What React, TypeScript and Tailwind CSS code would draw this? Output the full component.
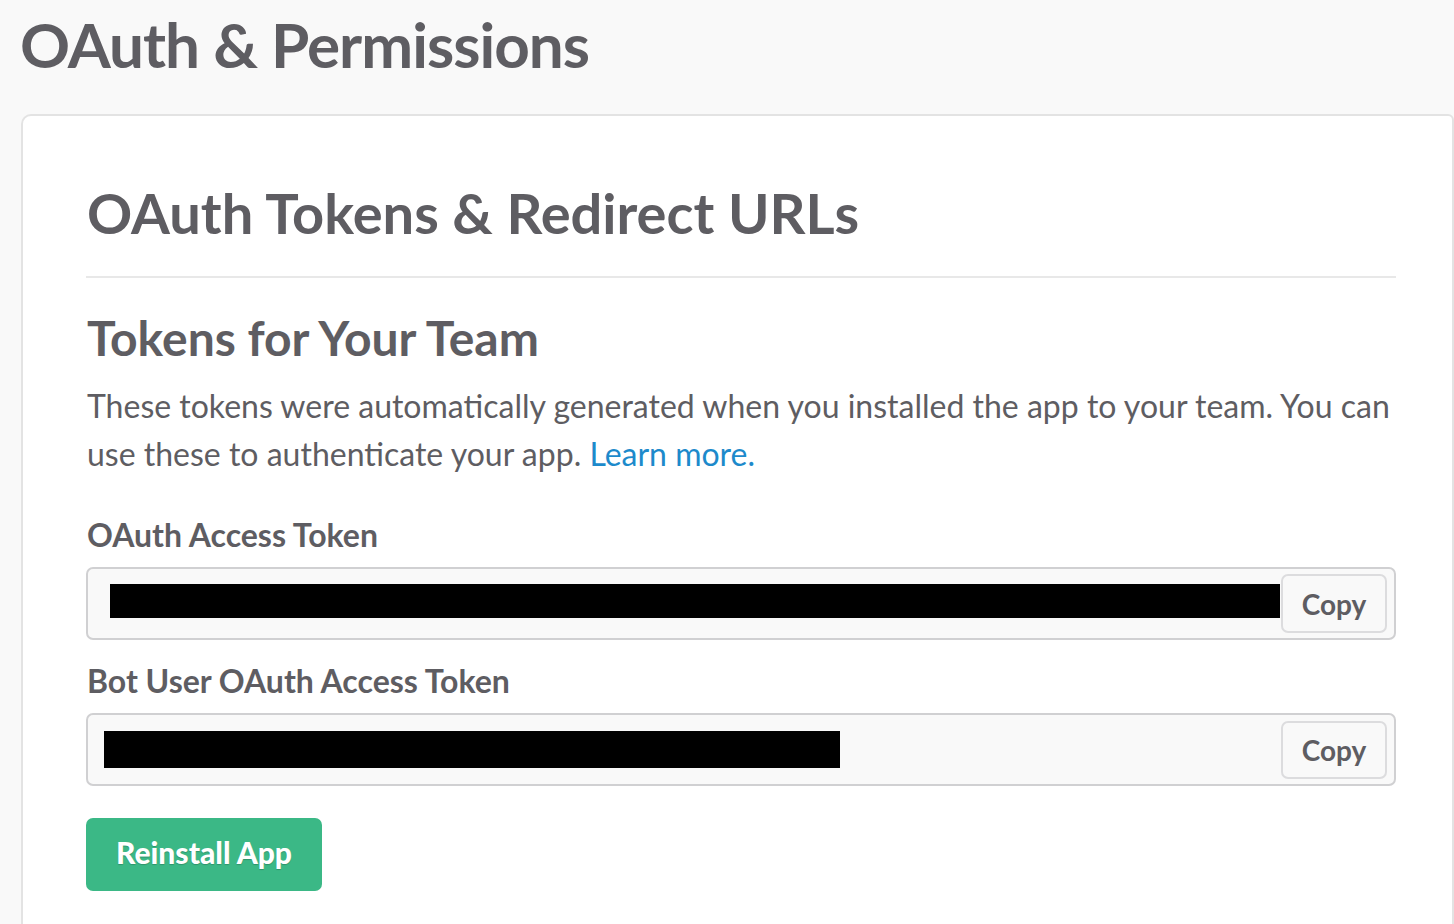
import React from "react";

const font = { fontFamily: "Lato, 'Noto Sans', sans-serif" };

export default function App() {
  return (
    <div className="min-h-[924px] w-[1454px] overflow-hidden bg-[#f9f9f9]" style={font}>
      <h1 className="pl-[20px] pt-[6px] text-[62px] font-bold leading-[76px] tracking-[-1px] text-[#5e5d62]">
        OAuth &amp; Permissions
      </h1>
      <div className="ml-[21px] mt-[32px] rounded-tl-[10px] rounded-tr-[6px] border-2 border-[#e3e3e3] bg-white pl-[63px] pr-[56px] pt-[60px] pb-[40px]">
        <h2 className="pl-[1px] text-[56px] font-bold leading-[74px] text-[#5e5d62]">OAuth Tokens &amp; Redirect URLs</h2>
        <div className="mt-[26px] h-[2px] bg-[#e8e8e8]" />
        <h3 className="mt-[32px] pl-[1px] text-[48px] font-bold leading-[56px] text-[#5e5d62]">Tokens for Your Team</h3>
        <p className="mt-[16px] pl-[1px] text-[32px] leading-[48px] text-[#5e5d62]">
          These tokens were automatically generated when you installed the app to your team. You can use these to
          authenticate your app. <span className="text-[#1d8acb]">Learn more.</span>
        </p>
        <div className="mt-[39px] pl-[1px] text-[32px] font-bold leading-[36px] text-[#5e5d62]">OAuth Access Token</div>
        <div className="mt-[14px] flex items-start h-[73px] rounded-[7px] border-2 border-[#d0d0d2] bg-[#f9f9f9] pr-[7px]">
          <div className="flex-1 pl-[22px] pt-[15px]">
            <div className="h-[34px] w-[1170px] bg-black" />
          </div>
          <button className="mt-[5px] h-[59px] w-[106px] rounded-[7px] border-2 border-[#dcdcde] bg-[#f9f9f9] text-[28px] font-bold text-[#5e5d62]">
            Copy
          </button>
        </div>
        <div className="mt-[23px] pl-[1px] text-[32px] font-bold leading-[36px] text-[#5e5d62]">Bot User OAuth Access Token</div>
        <div className="mt-[14px] flex items-start h-[73px] rounded-[7px] border-2 border-[#d0d0d2] bg-[#f9f9f9] pr-[7px]">
          <div className="flex-1 pl-[16px] pt-[16px]">
            <div className="h-[37px] w-[736px] bg-black" />
          </div>
          <button className="mt-[6px] h-[58px] w-[106px] rounded-[7px] border-2 border-[#dcdcde] bg-[#f9f9f9] text-[28px] font-bold text-[#5e5d62]">
            Copy
          </button>
        </div>
        <button className="mt-[32px] h-[73px] w-[236px] rounded-[7px] bg-[#3bb886] pb-[5px] text-[30px] font-black text-white [text-shadow:0_1px_1px_rgba(0,0,0,0.2)]">
          Reinstall App
        </button>
      </div>
    </div>
  );
}
